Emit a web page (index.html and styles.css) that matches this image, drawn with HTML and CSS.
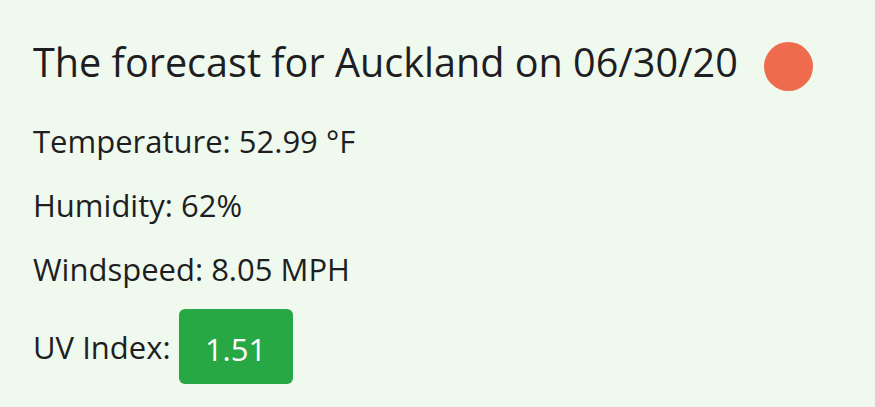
FILE: index.html
```html
<!DOCTYPE html>
<html lang="en">
<head>
<meta charset="utf-8">
<title>Forecast</title>
<link rel="stylesheet" href="styles.css">
</head>
<body>
<main class="forecast">
  <div class="title-row">
    <h1 class="title">The forecast for Auckland on 06/30/20</h1>
    <span class="status-dot"></span>
  </div>
  <p class="stat">Temperature: 52.99 °F</p>
  <p class="stat">Humidity: 62%</p>
  <p class="stat">Windspeed: 8.05 MPH</p>
  <div class="stat uv-row">
    <span>UV Index:</span>
    <span class="uv-badge">1.51</span>
  </div>
</main>
</body>
</html>
```
FILE: styles.css
```css
html, body {
  margin: 0;
  padding: 0;
  background: #eff9ee;
}
body {
  font-family: "Open Sans", "Noto Sans", sans-serif;
  color: #1e1e22;
}
.forecast {
  padding: 32px 0 0 33px;
  display: flex;
  flex-direction: column;
  align-items: flex-start;
  gap: 16px;
}
.title-row {
  display: flex;
  align-items: center;
  gap: 26px;
  margin-bottom: 9px;
}
.title {
  margin: 0;
  font-size: 39.6px;
  font-weight: 400;
  line-height: 60px;
}
.status-dot {
  width: 49px;
  height: 49px;
  border-radius: 50%;
  background: #ee6c4d;
  margin-top: 9px;
}
.stat {
  margin: 0;
  font-size: 31px;
  line-height: 48px;
}
.uv-row {
  display: flex;
  align-items: center;
  gap: 8px;
}
.uv-badge {
  background: #28a745;
  color: #fff;
  border-radius: 6px;
  height: 75px;
  width: 114px;
  display: flex;
  align-items: center;
  justify-content: center;
  padding-top: 4px;
  box-sizing: border-box;
}
```
